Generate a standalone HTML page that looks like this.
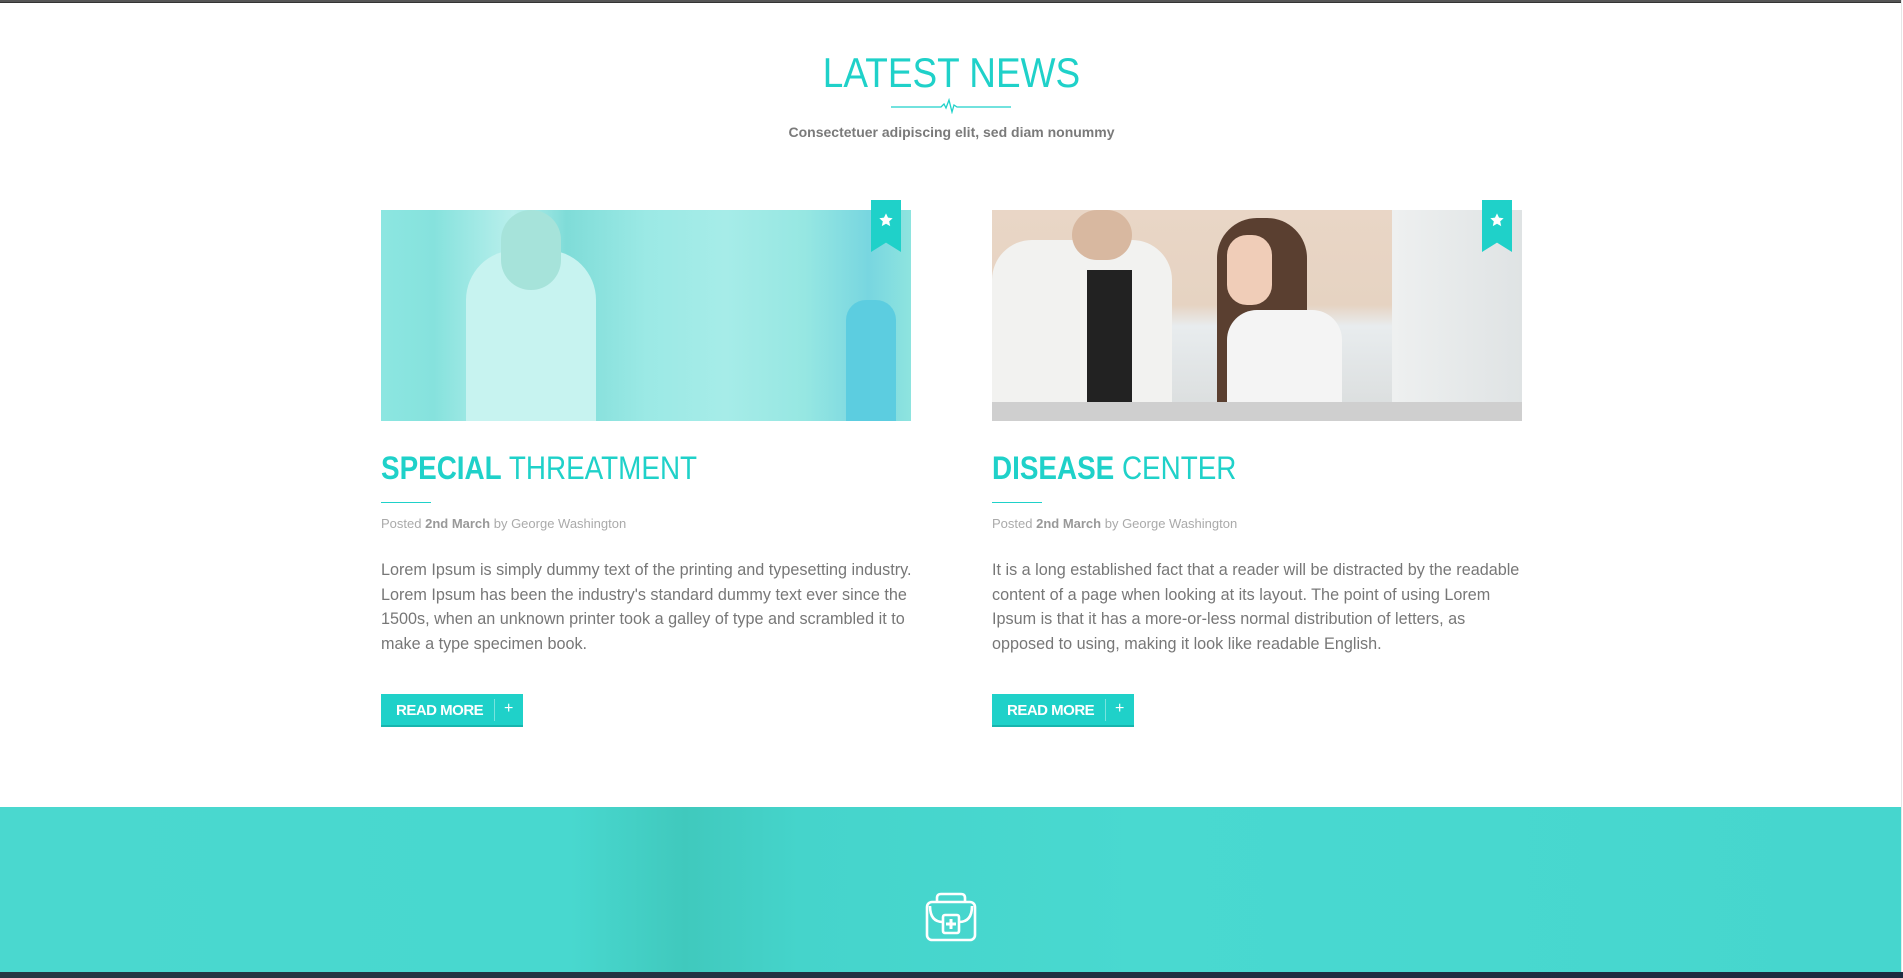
<!DOCTYPE html>
<html><head><meta charset="utf-8"><style>
*{margin:0;padding:0;box-sizing:border-box}
body{width:1903px;height:978px;overflow:hidden;background:#fff;font-family:"Liberation Sans",sans-serif;position:relative}
.top{position:absolute;left:0;top:0;width:1903px;height:3px;background:#555;border-bottom:1px solid #333}
h1{position:absolute;left:0;width:1903px;top:49px;text-align:center;color:#1fd1c9;font-weight:normal;font-size:42px;transform:scaleX(0.88)}
.pulse{position:absolute;left:891px;top:98px}
.sub{position:absolute;left:0;width:1903px;top:124px;text-align:center;color:#7a7a7a;font-weight:bold;font-size:14px}
.card{position:absolute;top:200px;width:530px}
.img{position:absolute;left:0;top:10px;width:530px;height:211px;overflow:hidden}
.rib{position:absolute;left:490px;top:0;width:30px;height:52px;background:#1fd1c9;clip-path:polygon(0 0,100% 0,100% 100%,50% 82%,0 100%)}
.rib svg{position:absolute;left:7px;top:12px}
.h{position:absolute;top:250px;left:0;font-size:32px;color:#1fd1c9;white-space:nowrap;transform:scaleX(0.87);transform-origin:0 0}
.h b{font-weight:bold}
.ul{position:absolute;top:302px;left:0;width:50px;height:1px;background:#1fd1c9}
.meta{position:absolute;top:316px;left:0;font-size:13px;color:#aaa}
.meta b{color:#999}
.p{position:absolute;top:358px;left:0;width:535px;font-size:16.2px;line-height:24.5px;color:#777}
.btn{position:absolute;top:494px;left:0;width:142px;height:33px;background:#1fd1c9;color:#fff;border-bottom:2px solid #17b5ae}
.btn span{position:absolute;left:15px;top:8px;font-size:15px;font-weight:bold;letter-spacing:-0.5px}
.btn i{position:absolute;left:113px;top:5px;width:1px;height:22px;background:rgba(255,255,255,.4)}
.btn em{position:absolute;left:123px;top:6px;font-style:normal;font-size:16px}
.band{position:absolute;left:0;top:807px;width:1901px;height:165px;background:linear-gradient(90deg,#4ad8cf 0%,#48d8cf 30%,#40c9bd 36%,#45d4cb 42%,#49d9d0 60%,#46d6ce 100%)}
.bar{position:absolute;left:0;top:972px;width:1903px;height:6px;background:linear-gradient(90deg,#253843,#1e2a40)}
.rline{position:absolute;left:1901px;top:0;width:2px;height:972px;background:#fff;border-left:1px solid #e6e6e6}
</style></head><body>
<div class="top"></div>
<h1>LATEST NEWS</h1>
<svg class="pulse" width="120" height="16" viewBox="0 0 120 16"><path d="M0 9 H50 L53 6 L55 10 L58 2 L61 14 L63 7 L66 9 H120" fill="none" stroke="#1fd1c9" stroke-width="1.3"/></svg>
<div class="sub">Consectetuer adipiscing elit, sed diam nonummy</div>

<div class="card" style="left:381px">
 <div class="img" style="background:linear-gradient(90deg,#8ce6e1 0%,#86e2dd 10%,#b9efec 25%,#7fdcd8 35%,#9be9e5 50%,#a6ece8 65%,#96e7e2 80%,#78d6e0 92%,#8ee4df 100%)">
  <div style="position:absolute;left:85px;top:40px;width:130px;height:171px;background:#c7f3f0;border-radius:50px 50px 0 0"></div>
  <div style="position:absolute;left:120px;top:0;width:60px;height:80px;background:#a6e3da;border-radius:30px"></div>
  <div style="position:absolute;left:465px;top:90px;width:50px;height:121px;background:#5ccde0;border-radius:20px 20px 0 0"></div>
 </div>
 <div class="rib"><svg width="16" height="16" viewBox="0 0 24 24"><path d="M12 2l3 6.5 7 .8-5.2 4.8 1.5 7L12 17.6 5.7 21.1l1.5-7L2 9.3l7-.8z" fill="#fff"/></svg></div>
 <div class="h"><b>SPECIAL</b> THREATMENT</div>
 <div class="ul"></div>
 <div class="meta">Posted <b>2nd March</b> by George Washington</div>
 <div class="p">Lorem Ipsum is simply dummy text of the printing and typesetting industry. Lorem Ipsum has been the industry's standard dummy text ever since the 1500s, when an unknown printer took a galley of type and scrambled it to make a type specimen book.</div>
 <div class="btn"><span>READ MORE</span><i></i><em>+</em></div>
</div>

<div class="card" style="left:992px">
 <div class="img" style="background:linear-gradient(180deg,#e9d6c6 0%,#e6d3c2 45%,#e8ecee 55%,#d9dcdc 100%)">
  <div style="position:absolute;left:0;top:30px;width:180px;height:181px;background:#f2f2f0;border-radius:40px 40px 0 0"></div>
  <div style="position:absolute;left:95px;top:60px;width:45px;height:151px;background:#222"></div>
  <div style="position:absolute;left:80px;top:0;width:60px;height:50px;background:#d8b8a0;border-radius:25px"></div>
  <div style="position:absolute;left:225px;top:8px;width:90px;height:203px;background:#5a3f30;border-radius:40px 40px 0 0"></div>
  <div style="position:absolute;left:235px;top:100px;width:115px;height:111px;background:#f4f4f4;border-radius:30px 30px 0 0"></div>
  <div style="position:absolute;left:235px;top:25px;width:45px;height:70px;background:#f0cdb8;border-radius:20px"></div>
  <div style="position:absolute;left:400px;top:0;width:130px;height:211px;background:linear-gradient(90deg,#eef0f0,#dfe3e4)"></div>
  <div style="position:absolute;left:0;top:192px;width:530px;height:19px;background:#cfcfcf"></div>
 </div>
 <div class="rib"><svg width="16" height="16" viewBox="0 0 24 24"><path d="M12 2l3 6.5 7 .8-5.2 4.8 1.5 7L12 17.6 5.7 21.1l1.5-7L2 9.3l7-.8z" fill="#fff"/></svg></div>
 <div class="h"><b>DISEASE</b> CENTER</div>
 <div class="ul"></div>
 <div class="meta">Posted <b>2nd March</b> by George Washington</div>
 <div class="p">It is a long established fact that a reader will be distracted by the readable content of a page when looking at its layout. The point of using Lorem Ipsum is that it has a more-or-less normal distribution of letters, as opposed to using, making it look like readable English.</div>
 <div class="btn"><span>READ MORE</span><i></i><em>+</em></div>
</div>

<div class="band"></div>
<svg style="position:absolute;left:925px;top:892px" width="52" height="52" viewBox="0 0 52 52" fill="none" stroke="#fff" stroke-width="2.6">
 <path d="M12 10 V6 Q12 2 16 2 H36 Q40 2 40 6 V10"/>
 <rect x="2" y="10" width="48" height="38" rx="5"/>
 <path d="M5 14 Q5 30 18 30 M47 14 Q47 30 34 30"/>
 <rect x="18" y="23" width="16" height="18" rx="2"/>
 <path d="M26 27 V37 M21 32 H31" stroke-width="3"/>
</svg>
<div class="bar"></div>
<div class="rline"></div>
</body></html>
